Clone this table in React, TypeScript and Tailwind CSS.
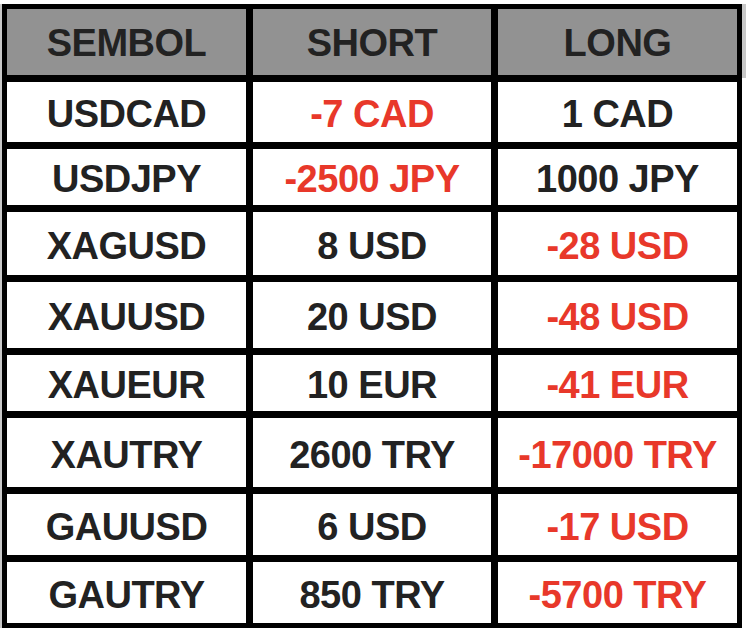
import React from "react";

type Row = { sym: string; short: string; long: string; h: string };

const rows: Row[] = [
  { sym: "USDCAD", short: "-7 CAD", long: "1 CAD", h: "h-[60px]" },
  { sym: "USDJPY", short: "-2500 JPY", long: "1000 JPY", h: "h-[56px]" },
  { sym: "XAGUSD", short: "8 USD", long: "-28 USD", h: "h-[63px]" },
  { sym: "XAUUSD", short: "20 USD", long: "-48 USD", h: "h-[66px]" },
  { sym: "XAUEUR", short: "10 EUR", long: "-41 EUR", h: "h-[56px]" },
  { sym: "XAUTRY", short: "2600 TRY", long: "-17000 TRY", h: "h-[69px]" },
  { sym: "GAUUSD", short: "6 USD", long: "-17 USD", h: "h-[61px]" },
  { sym: "GAUTRY", short: "850 TRY", long: "-5700 TRY", h: "h-[61px]" },
];

function Cell({ text, header, h }: { text: string; header?: boolean; h: string }) {
  const red = text.startsWith("-");
  return (
    <div
      className={`${h} flex items-center justify-center ${
        header ? "bg-[#929292] pt-[1px]" : "bg-white pt-[4px]"
      } ${red ? "text-[#e8382a]" : "text-[#222222]"} text-[38px] font-bold tracking-[-0.5px] leading-none`}
    >
      {text}
    </div>
  );
}

export default function App() {
  return (
    <div
      className="w-[746px] h-[630px] bg-white flex pt-[4px] overflow-hidden"
      style={{ fontFamily: '"Liberation Sans", Arial, Helvetica, sans-serif' }}
    >
      <div className="w-[2px] h-[624px] bg-[#c8c8c8]" />
      <div className="w-[740px] h-[624px] bg-black p-[5px] grid grid-cols-[239px_238px_239px] gap-[7px] content-start">
        <Cell text="SEMBOL" header h="h-[66px]" />
        <Cell text="SHORT" header h="h-[66px]" />
        <Cell text="LONG" header h="h-[66px]" />
        {rows.map((r) => (
          <React.Fragment key={r.sym}>
            <Cell text={r.sym} h={r.h} />
            <Cell text={r.short} h={r.h} />
            <Cell text={r.long} h={r.h} />
          </React.Fragment>
        ))}
      </div>
      <div className="w-[4px] flex flex-col">
        <div className="h-[74px] bg-[#c8c8c8]" />
        <div className="flex-1 bg-white" />
      </div>
    </div>
  );
}
